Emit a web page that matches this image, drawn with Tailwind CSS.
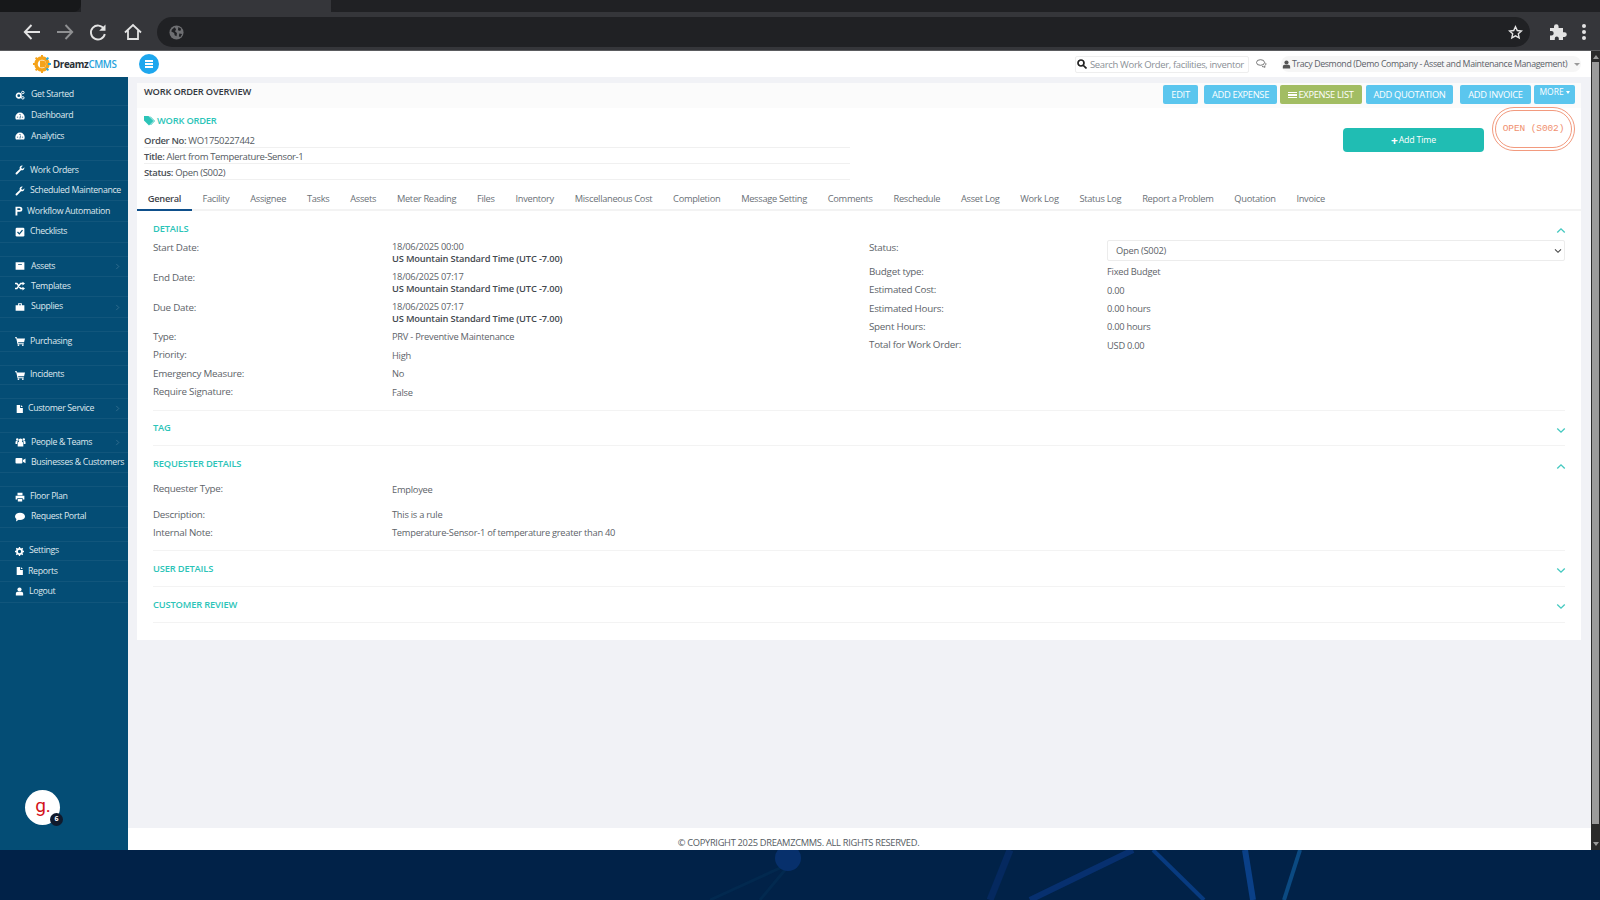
<!DOCTYPE html>
<html lang="en">
<head>
  <meta charset="UTF-8">
  <title>Work Order Overview</title>
  <script src="https://cdn.jsdelivr.net/npm/@tailwindcss/browser@4"></script>
</head>
<body class="w-[1600px] h-[900px] overflow-hidden bg-[#012248] font-['Open_Sans',sans-serif] text-[#555b62]">

  <!-- icon set -->
  <svg class="hidden">
    <symbol id="i-cogs" viewBox="0 0 16 16"><circle cx="6" cy="9" r="3.6" fill="none" stroke="currentColor" stroke-width="2.6"/><circle cx="12.5" cy="4" r="2" fill="none" stroke="currentColor" stroke-width="1.6"/><circle cx="12.5" cy="12.5" r="2" fill="none" stroke="currentColor" stroke-width="1.6"/></symbol>
    <symbol id="i-gauge" viewBox="0 0 16 16"><path fill="currentColor" d="M8 2.5a7.500 7.500 0 0 0-7.500 7.500c0 1.400.4 2.600 1 3.600h13c.6-1 1-2.200 1-3.600A7.500 7.500 0 0 0 8 2.500zM7 5h2v1.500H7zM3 9h2v1.500H3zm8 0h2v1.500h-2zM7.200 12l1-5 1 .2-.6 4.800z"/></symbol>
    <symbol id="i-wrench" viewBox="0 0 16 16"><path fill="currentColor" d="M15 4.500a4 4 0 0 1-5.400 3.800L3.500 14.600a1.500 1.500 0 0 1-2.200-2.100l6.300-6.200A4 4 0 0 1 12.500 1L10 3.400l.5 2 2 .5L15 3.500z"/></symbol>
    <symbol id="i-flow" viewBox="0 0 16 16"><path fill="currentColor" d="M4 1h7a4 4 0 0 1 0 8H7v6H4zm3 2.500v3h3.500a1.500 1.500 0 0 0 0-3z"/></symbol>
    <symbol id="i-check" viewBox="0 0 16 16"><rect x="1" y="1" width="14" height="14" rx="2" fill="currentColor"/><path d="M4 8l3 3 5-6" fill="none" stroke="#044d75" stroke-width="2"/></symbol>
    <symbol id="i-box" viewBox="0 0 16 16"><path fill="currentColor" d="M1 2h14v12H1zm4 3v1.500h6V5z"/></symbol>
    <symbol id="i-random" viewBox="0 0 16 16"><path fill="none" stroke="currentColor" stroke-width="2.200" d="M0 4h3l6 8h4M0 12h3l6-8h4"/><path fill="currentColor" d="M12 1l4 3-4 3zM12 9l4 3-4 3z"/></symbol>
    <symbol id="i-case" viewBox="0 0 16 16"><path fill="currentColor" d="M1 5h14v9H1zM5 2h6v3H9.500V3.500h-3V5H5z"/></symbol>
    <symbol id="i-cart" viewBox="0 0 16 16"><path fill="currentColor" d="M0 2h3l.5 2H16l-1.500 6H5l.3 1.500H14V13H4L2 3.500H0z"/><circle cx="5.500" cy="14.500" r="1.500" fill="currentColor"/><circle cx="12.500" cy="14.500" r="1.500" fill="currentColor"/></symbol>
    <symbol id="i-file" viewBox="0 0 16 16"><path fill="currentColor" d="M3 1h6v5h5v9H3zM10.500 1L14 4.500h-3.500z"/></symbol>
    <symbol id="i-users" viewBox="0 0 16 16"><circle cx="8" cy="5.500" r="3" fill="currentColor"/><circle cx="2.800" cy="4" r="2" fill="currentColor"/><circle cx="13.200" cy="4" r="2" fill="currentColor"/><path fill="currentColor" d="M3.500 15V10a2 2 0 0 1 2-2h5a2 2 0 0 1 2 2v5zM0 11V8a1.500 1.500 0 0 1 1.500-1.500h2L2.500 11zM16 11V8a1.500 1.500 0 0 0-1.500-1.500h-2l1 4.500z"/></symbol>
    <symbol id="i-video" viewBox="0 0 16 16"><rect x="0" y="3" width="11" height="9" rx="1.500" fill="currentColor"/><path fill="currentColor" d="M12 6.500l4-2.500v7.500l-4-2.500z"/></symbol>
    <symbol id="i-print" viewBox="0 0 16 16"><path fill="currentColor" d="M4 1h8v4H4zM1 6h14v6h-2.500v-2h-9v2H1zM4.500 11h7v4h-7z"/></symbol>
    <symbol id="i-bubble" viewBox="0 0 16 16"><ellipse cx="8" cy="7" rx="8" ry="5.800" fill="currentColor"/><path fill="currentColor" d="M2.500 10L1.500 15l5-3z"/></symbol>
    <symbol id="i-gear" viewBox="0 0 16 16"><circle cx="8" cy="8" r="4.500" fill="none" stroke="currentColor" stroke-width="3.200"/><path stroke="currentColor" stroke-width="2.400" d="M8 0v3M8 13v3M0 8h3M13 8h3M2.300 2.300l2 2M11.700 11.700l2 2M13.700 2.300l-2 2M4.300 11.700l-2 2"/></symbol>
    <symbol id="i-user" viewBox="0 0 16 16"><circle cx="8" cy="4.500" r="3.700" fill="currentColor"/><path fill="currentColor" d="M1.500 15v-3.500a3 3 0 0 1 3-3h7a3 3 0 0 1 3 3V15z"/></symbol>
    <symbol id="i-chev-r" viewBox="0 0 8 8"><path d="M2.500 1l3 3-3 3" fill="none" stroke="currentColor" stroke-width="1"/></symbol>
    <symbol id="i-up" viewBox="0 0 12 8"><path d="M1.500 6.500L6 2l4.500 4.500" fill="none" stroke="currentColor" stroke-width="1.600"/></symbol>
    <symbol id="i-down" viewBox="0 0 12 8"><path d="M1.500 1.500L6 6l4.500-4.500" fill="none" stroke="currentColor" stroke-width="1.600"/></symbol>
  </svg>

  <!-- browser chrome -->
  <div class="h-[12px] bg-[#202124] flex">
    <div class="w-[81px] bg-[#17181a] rounded-br-lg"></div>
    <div class="w-[250px] bg-[#35363a]"></div>
    <div class="flex-1 bg-[#202124] rounded-bl-lg"></div>
  </div>
  <div class="h-[39px] bg-[#35363a] flex items-center pl-[22px] pt-[2px] border-b border-[#5a5b5e]">
    <svg class="w-[20px] h-[20px] shrink-0 text-[#e3e3e3] mr-[13px]" viewBox="0 0 20 20" fill="none" stroke="currentColor" stroke-width="1.900"><path d="M18 10H3M9.500 3L2.800 10l6.700 7"/></svg>
    <svg class="w-[20px] h-[20px] shrink-0 text-[#8f9092] mr-[13px]" viewBox="0 0 20 20" fill="none" stroke="currentColor" stroke-width="1.900"><path d="M2 10h15M10.500 3l6.700 7-6.700 7"/></svg>
    <svg class="w-[20px] h-[20px] shrink-0 text-[#e3e3e3] mr-[15px]" viewBox="0 0 20 20" fill="none" stroke="currentColor" stroke-width="1.900"><path d="M16 7a7 7 0 1 0 .8 5"/><path fill="currentColor" stroke="none" d="M17.500 2.500v6.300h-6.300z"/></svg>
    <svg class="w-[20px] h-[20px] shrink-0 text-[#e3e3e3] mr-[14px]" viewBox="0 0 20 20" fill="none" stroke="currentColor" stroke-width="1.800"><path d="M2 10.500L10 3l8 7.500M5 8.500V17h10V8.500"/></svg>
    <div class="w-[1373px] h-[30px] shrink-0 bg-[#202124] rounded-full flex items-center pl-[12px] pr-[7px] justify-between">
      <svg class="w-[15px] h-[15px] text-[#6e6f72]" viewBox="0 0 16 16"><circle cx="8" cy="8" r="7.500" fill="currentColor"/><path fill="#202124" d="M3 5l3-2.500 1.500 2-1 2.500 2 1.500-.5 3.500-2-1-.5-2.500L2.500 7zM10 2l3 2-1 2.500-2.500-1zM11 9l3 .5-2 3.500-1.500-1z"/></svg>
      <svg class="w-[15px] h-[15px] text-[#e3e3e3]" viewBox="0 0 16 16" fill="none" stroke="currentColor" stroke-width="1.500"><path d="M8 1.800l1.900 4.100 4.400.5-3.300 3 .9 4.400L8 11.600l-3.900 2.200.9-4.400-3.300-3 4.400-.5z"/></svg>
    </div>
    <svg class="w-[18px] h-[18px] shrink-0 text-[#e3e3e3] ml-[19px]" viewBox="0 0 18 18"><path fill="currentColor" d="M1 5h4V3.500a2.300 2.300 0 0 1 4.600 0V5H14v4.300h1.500a2.300 2.300 0 0 1 0 4.600H14V17H9.800v-1.500a2 2 0 0 0-4 0V17H1v-4.500h1.400a2.300 2.300 0 0 0 0-4.600H1z"/></svg>
    <div class="ml-[15px] flex flex-col gap-[2.500px]">
      <span class="block w-[3.500px] h-[3.500px] rounded-full bg-[#e3e3e3]"></span>
      <span class="block w-[3.500px] h-[3.500px] rounded-full bg-[#e3e3e3]"></span>
      <span class="block w-[3.500px] h-[3.500px] rounded-full bg-[#e3e3e3]"></span>
    </div>
  </div>

  <!-- page + scrollbar -->
  <div class="h-[799px] flex">
    <div class="w-[1591px] flex flex-col bg-[#f1f2f6]">

      <!-- top header -->
      <header class="h-[26px] shrink-0 bg-white flex items-center">
        <div class="w-[128px] flex items-center pl-[33px]">
          <svg class="w-[18px] h-[18px] shrink-0" viewBox="0 0 18 18">
            <circle cx="9" cy="9" r="6" fill="none" stroke="#f5a31a" stroke-width="3.500"/>
            <path stroke="#f5a31a" stroke-width="2" d="M9 0v3M0 9h3M2.600 2.600l2 2M2.600 15.400l2-2M9 15v3"/>
            <path stroke="#29abe2" stroke-width="2" d="M15 9h3M15.400 2.600l-2 2M15.400 15.400l-2-2"/>
            <path fill="#f5a31a" d="M7 5.500h2.500a3.500 3.500 0 0 1 0 7H7z"/>
          </svg>
          <span class="ml-[2px] pt-[3px] text-[9.800px] font-bold text-[#2a2f36] tracking-[-0.4px]">Dreamz<span class="text-[#29a3dd] font-semibold">CMMS</span></span>
        </div>
        <div class="ml-[11px] w-[20px] h-[20px] rounded-full bg-[#1ea7ee] flex flex-col items-center justify-center gap-[1.500px]">
          <span class="block w-[8px] h-[1.500px] bg-white"></span>
          <span class="block w-[8px] h-[1.500px] bg-white"></span>
          <span class="block w-[8px] h-[1.500px] bg-white"></span>
        </div>
        <div class="ml-auto w-[174px] h-[17px] border border-[#eeeeee] rounded-[2px] flex items-center pl-[1px] overflow-hidden whitespace-nowrap text-[9.500px] tracking-[-0.35px] text-[#8b9096]">
          <svg class="w-[10px] h-[10px] shrink-0 mr-[3px] text-[#222]" viewBox="0 0 10 10" fill="none" stroke="currentColor" stroke-width="1.700"><circle cx="4" cy="4" r="3"/><path d="M6.300 6.300L9.500 9.500"/></svg>
          <span class="pt-[2px]">Search Work Order, facilities, inventor</span>
        </div>
        <svg class="w-[11px] h-[10px] shrink-0 ml-[7px] text-[#666]" viewBox="0 0 11 10" fill="none" stroke="currentColor" stroke-width="0.900"><ellipse cx="4.500" cy="3.500" rx="4" ry="2.800"/><path d="M6 7.500c1 .3 2 .2 3 .8l-.3-1.500c1.200-.8 1.500-2 .8-3"/></svg>
        <div class="ml-[14px] mr-[10px] w-[300px] h-[16px] bg-[#f6f6f6] rounded-full flex items-center whitespace-nowrap text-[8.800px] tracking-[-0.35px] text-[#5b6168]">
          <svg class="w-[9px] h-[9px] shrink-0 mr-[1px] ml-[1px] text-[#555]"><use href="#i-user"/></svg>
          <span class="pt-[1px]">Tracy Desmond (Demo Company - Asset and Maintenance Management)</span>
          <span class="ml-[7px] w-0 h-0 border-x-[3px] border-x-transparent border-t-[3px] border-t-[#999]"></span>
        </div>
      </header>

      <div class="flex-1 flex min-h-0">
        <!-- sidebar -->
        <aside class="relative w-[128px] shrink-0 bg-[#044d75] text-[#dfe8ee] text-[8.800px] tracking-[-0.35px] pt-[8px]">
          <nav class="flex flex-col">
            <a class="h-[20.700px] border-b border-white/5 flex items-center pl-[15px] gap-[6px] whitespace-nowrap"><svg class="w-[10px] h-[10px] shrink-0 text-white"><use href="#i-cogs"/></svg>Get Started</a>
            <a class="h-[20.700px] border-b border-white/5 flex items-center pl-[15px] gap-[6px] whitespace-nowrap"><svg class="w-[10px] h-[10px] shrink-0 text-white"><use href="#i-gauge"/></svg>Dashboard</a>
            <a class="h-[20.700px] border-b border-white/5 flex items-center pl-[15px] gap-[6px] whitespace-nowrap"><svg class="w-[10px] h-[10px] shrink-0 text-white"><use href="#i-gauge"/></svg>Analytics</a>

            <a class="mt-[13px] h-[20.700px] border-y border-white/5 flex items-center pl-[15px] gap-[5px] whitespace-nowrap"><svg class="w-[10px] h-[10px] shrink-0 text-white"><use href="#i-wrench"/></svg>Work Orders</a>
            <a class="h-[20.700px] border-b border-white/5 flex items-center pl-[15px] gap-[5px] whitespace-nowrap"><svg class="w-[10px] h-[10px] shrink-0 text-white"><use href="#i-wrench"/></svg>Scheduled Maintenance</a>
            <a class="h-[20.700px] border-b border-white/5 flex items-center pl-[13px] gap-[4px] whitespace-nowrap"><svg class="w-[10px] h-[10px] shrink-0 text-white"><use href="#i-flow"/></svg>Workflow Automation</a>
            <a class="h-[20.700px] border-b border-white/5 flex items-center pl-[15px] gap-[5px] whitespace-nowrap"><svg class="w-[10px] h-[10px] shrink-0 text-white"><use href="#i-check"/></svg>Checklists</a>

            <a class="mt-[13px] h-[20.700px] border-y border-white/5 flex items-center pl-[15px] gap-[6px] whitespace-nowrap"><svg class="w-[10px] h-[10px] shrink-0 text-white"><use href="#i-box"/></svg>Assets<svg class="w-[7px] h-[7px] ml-auto mr-[7px] text-white/20"><use href="#i-chev-r"/></svg></a>
            <a class="h-[20.700px] border-b border-white/5 flex items-center pl-[15px] gap-[6px] whitespace-nowrap"><svg class="w-[10px] h-[10px] shrink-0 text-white"><use href="#i-random"/></svg>Templates</a>
            <a class="h-[20.700px] border-b border-white/5 flex items-center pl-[15px] gap-[6px] whitespace-nowrap"><svg class="w-[10px] h-[10px] shrink-0 text-white"><use href="#i-case"/></svg>Supplies<svg class="w-[7px] h-[7px] ml-auto mr-[7px] text-white/20"><use href="#i-chev-r"/></svg></a>

            <a class="mt-[13px] h-[20.700px] border-y border-white/5 flex items-center pl-[15px] gap-[5px] whitespace-nowrap"><svg class="w-[10px] h-[10px] shrink-0 text-white"><use href="#i-cart"/></svg>Purchasing</a>

            <a class="mt-[13px] h-[20.700px] border-y border-white/5 flex items-center pl-[15px] gap-[5px] whitespace-nowrap"><svg class="w-[10px] h-[10px] shrink-0 text-white"><use href="#i-cart"/></svg>Incidents</a>

            <a class="mt-[13px] h-[20.700px] border-y border-white/5 flex items-center pl-[15px] gap-[4px] whitespace-nowrap"><svg class="w-[9px] h-[10px] shrink-0 text-white"><use href="#i-file"/></svg>Customer Service<svg class="w-[7px] h-[7px] ml-auto mr-[7px] text-white/20"><use href="#i-chev-r"/></svg></a>

            <a class="mt-[13px] h-[20.700px] border-y border-white/5 flex items-center pl-[15px] gap-[5px] whitespace-nowrap"><svg class="w-[11px] h-[10px] shrink-0 text-white"><use href="#i-users"/></svg>People &amp; Teams<svg class="w-[7px] h-[7px] ml-auto mr-[7px] text-white/20"><use href="#i-chev-r"/></svg></a>
            <a class="h-[20.700px] border-b border-white/5 flex items-center pl-[15px] gap-[5px] whitespace-nowrap"><svg class="w-[11px] h-[10px] shrink-0 text-white -mt-[3px]"><use href="#i-video"/></svg>Businesses &amp; Customers</a>

            <a class="mt-[13px] h-[20.700px] border-y border-white/5 flex items-center pl-[15px] gap-[5px] whitespace-nowrap"><svg class="w-[10px] h-[10px] shrink-0 text-white"><use href="#i-print"/></svg>Floor Plan</a>
            <a class="h-[20.700px] border-b border-white/5 flex items-center pl-[15px] gap-[6px] whitespace-nowrap"><svg class="w-[10px] h-[10px] shrink-0 text-white"><use href="#i-bubble"/></svg>Request Portal</a>

            <a class="mt-[13px] h-[20.700px] border-y border-white/5 flex items-center pl-[15px] gap-[5px] whitespace-nowrap"><svg class="w-[9px] h-[9px] shrink-0 text-white"><use href="#i-gear"/></svg>Settings</a>
            <a class="h-[20.700px] border-b border-white/5 flex items-center pl-[15px] gap-[4px] whitespace-nowrap"><svg class="w-[9px] h-[10px] shrink-0 text-white"><use href="#i-file"/></svg>Reports</a>
            <a class="h-[20.700px] border-b border-white/5 flex items-center pl-[15px] gap-[5px] whitespace-nowrap"><svg class="w-[9px] h-[9px] shrink-0 text-white"><use href="#i-user"/></svg>Logout</a>
          </nav>

          <!-- chat widget floating over sidebar -->
          <div class="absolute left-[25px] top-[713px] w-[35px] h-[35px] rounded-full bg-white flex items-center justify-center">
            <span class="text-[#d3121b] text-[19px] tracking-normal leading-none font-['Roboto',sans-serif] -mt-[5px] ml-[1px]">g.</span>
            <span class="absolute left-[25px] top-[23px] w-[13px] h-[13px] rounded-full bg-[#101a2c] text-white text-[7px] tracking-normal font-bold flex items-center justify-center">6</span>
          </div>
        </aside>

        <!-- main column -->
        <div class="flex-1 flex flex-col min-w-0">
          <main class="flex-1 pt-[6px] pl-[9px] pr-[10px]">
            <div class="bg-white h-[557px] flex flex-col">
              <!-- overview title + actions -->
              <div class="h-[25px] bg-[#fbfbfb] flex items-start pl-[7px] pr-[6px]">
                <h1 class="mt-[2px] text-[9.300px] leading-[14px] font-semibold text-[#33383e] tracking-[-0.2px]">WORK ORDER OVERVIEW</h1>
                <div class="ml-auto mt-[2px] flex text-[9.300px] tracking-[-0.3px] text-white">
                  <button class="w-[35px] h-[19px] pt-[1px] bg-[#5bc6ee] rounded-[2px]">EDIT</button>
                  <button class="ml-[6px] w-[73px] h-[19px] pt-[1px] bg-[#5bc6ee] rounded-[2px]">ADD EXPENSE</button>
                  <button class="ml-[3px] w-[82px] h-[19px] pt-[1px] bg-[#a2bd63] rounded-[2px] flex items-center justify-center gap-[1px]">
                    <span class="flex flex-col gap-[1px]"><span class="block w-[9px] h-[1.500px] bg-white"></span><span class="block w-[9px] h-[1.500px] bg-white"></span><span class="block w-[9px] h-[1.500px] bg-white"></span></span>
                    EXPENSE LIST
                  </button>
                  <button class="ml-[4px] w-[87px] h-[19px] pt-[1px] bg-[#5bc6ee] rounded-[2px]">ADD QUOTATION</button>
                  <button class="ml-[7px] w-[71px] h-[19px] pt-[1px] bg-[#5bc6ee] rounded-[2px]">ADD INVOICE</button>
                  <button class="ml-[3px] w-[41px] h-[19px] bg-[#5bc6ee] rounded-[2px] text-[8.500px] tracking-normal flex items-start pt-[1px] justify-center gap-[2px]">MORE<span class="mt-[5px] w-0 h-0 border-x-[2.500px] border-x-transparent border-t-[3px] border-t-white"></span></button>
                </div>
              </div>

              <!-- summary block -->
              <div class="h-[77px] pl-[7px] pr-[6px] flex">
                <div class="w-[706px] text-[9.500px] tracking-[-0.35px]">
                  <div class="h-[25px] flex items-center gap-[2px] text-[#2cc4b8] text-[9.300px] tracking-[-0.2px] font-semibold">
                    <svg class="w-[11px] h-[10px] shrink-0" viewBox="0 0 11 10"><path fill="currentColor" d="M0 0h4.500l5 5-4.500 4.500-5-5z"/><path fill="none" stroke="currentColor" d="M6 .5l4.500 4.500-4 4"/></svg>
                    WORK ORDER
                  </div>
                  <div class="h-[15px] pt-[3px] border-b border-[#f0f0f0] flex items-center"><b class="font-semibold text-[#4a4f55]">Order No:</b>&nbsp;WO1750227442</div>
                  <div class="h-[16px] pt-[3px] border-b border-[#f0f0f0] flex items-center"><b class="font-semibold text-[#4a4f55]">Title:</b>&nbsp;Alert from Temperature-Sensor-1</div>
                  <div class="h-[16px] pt-[3px] border-b border-[#f0f0f0] flex items-center"><b class="font-semibold text-[#4a4f55]">Status:</b>&nbsp;Open (S002)</div>
                </div>
                <button class="ml-auto mt-[20px] w-[141px] h-[24px] pt-[2px] bg-[#20bdb3] rounded-[4px] text-white text-[8.800px] tracking-[-0.2px] flex items-center justify-center gap-[1px]"><span class="font-bold text-[12px] leading-none">+</span>Add Time</button>
                <div class="ml-[8px] -mt-[1px] w-[83px] h-[44px] rounded-full border-[4px] border-double border-[#f29a7e] flex items-center justify-center font-['Liberation_Mono',monospace] text-[9.500px] tracking-[-0.1px] text-[#f0906f] whitespace-nowrap">OPEN (S002)</div>
              </div>

              <!-- tabs -->
              <div class="h-[26px] border-b-2 border-[#f3f3f3] flex text-[9.300px] tracking-[-0.3px] text-[#6b7177] whitespace-nowrap">
                <span class="w-[55px] h-[26px] pt-[3px] border-b-2 border-[#0e4f8b] flex items-center justify-center font-semibold text-[#3f444a]">General</span>
                <span class="px-[10.400px] pt-[3px] flex items-center">Facility</span>
                <span class="px-[10.400px] pt-[3px] flex items-center">Assignee</span>
                <span class="px-[10.400px] pt-[3px] flex items-center">Tasks</span>
                <span class="px-[10.400px] pt-[3px] flex items-center">Assets</span>
                <span class="px-[10.400px] pt-[3px] flex items-center">Meter Reading</span>
                <span class="px-[10.400px] pt-[3px] flex items-center">Files</span>
                <span class="px-[10.400px] pt-[3px] flex items-center">Inventory</span>
                <span class="px-[10.400px] pt-[3px] flex items-center">Miscellaneous Cost</span>
                <span class="px-[10.400px] pt-[3px] flex items-center">Completion</span>
                <span class="px-[10.400px] pt-[3px] flex items-center">Message Setting</span>
                <span class="px-[10.400px] pt-[3px] flex items-center">Comments</span>
                <span class="px-[10.400px] pt-[3px] flex items-center">Reschedule</span>
                <span class="px-[10.400px] pt-[3px] flex items-center">Asset Log</span>
                <span class="px-[10.400px] pt-[3px] flex items-center">Work Log</span>
                <span class="px-[10.400px] pt-[3px] flex items-center">Status Log</span>
                <span class="px-[10.400px] pt-[3px] flex items-center">Report a Problem</span>
                <span class="px-[10.400px] pt-[3px] flex items-center">Quotation</span>
                <span class="px-[10.400px] pt-[3px] flex items-center">Invoice</span>
              </div>

              <!-- sections -->
              <div class="px-[16px] text-[9.800px] tracking-[-0.25px] text-[#5d6369]">
                <section class="h-[200px] border-b border-[#f3f3f3]">
                  <div class="h-[34px] pt-[1px] flex items-center justify-between">
                    <h2 class="text-[9.300px] tracking-[-0.15px] font-semibold text-[#2cc4b8]">DETAILS</h2>
                    <svg class="w-[10px] h-[7px] mt-[4px] text-[#45c9c0] -mr-[1px]"><use href="#i-up"/></svg>
                  </div>
                  <div class="flex -mt-[7px]">
                    <div class="w-[716px] grid grid-cols-[239px_1fr] auto-rows-min">
                      <div class="h-[30px] pt-[3px]">Start Date:</div>
                      <div class="h-[30px] text-[9.300px] leading-[12px] pt-[3px]">18/06/2025 00:00<br><b class="font-semibold text-[#43484e] tracking-[-0.16px]">US Mountain Standard Time (UTC -7.00)</b></div>
                      <div class="h-[30px] pt-[3px]">End Date:</div>
                      <div class="h-[30px] text-[9.300px] leading-[12px] pt-[3px]">18/06/2025 07:17<br><b class="font-semibold text-[#43484e] tracking-[-0.16px]">US Mountain Standard Time (UTC -7.00)</b></div>
                      <div class="h-[30px] pt-[3px]">Due Date:</div>
                      <div class="h-[30px] text-[9.300px] leading-[12px] pt-[3px]">18/06/2025 07:17<br><b class="font-semibold text-[#43484e] tracking-[-0.16px]">US Mountain Standard Time (UTC -7.00)</b></div>
                      <div class="h-[18.500px] flex items-center">Type:</div><div class="h-[18.500px] flex items-center text-[9.300px]">PRV - Preventive Maintenance</div>
                      <div class="h-[18.500px] flex items-center">Priority:</div><div class="h-[18.500px] flex items-center text-[9.300px]">High</div>
                      <div class="h-[18.500px] flex items-center">Emergency Measure:</div><div class="h-[18.500px] flex items-center text-[9.300px]">No</div>
                      <div class="h-[18.500px] flex items-center">Require Signature:</div><div class="h-[18.500px] flex items-center text-[9.300px]">False</div>
                    </div>
                    <div class="flex-1 grid grid-cols-[238px_1fr] auto-rows-min">
                      <div class="h-[25px] pt-[3px]">Status:</div>
                      <div class="h-[25px] pt-[2px]">
                        <div class="h-[21px] w-[458px] border border-[#ececec] rounded-[2px] flex items-center justify-between pl-[8px] pr-[2px] text-[9.300px]">Open (S002)<svg class="w-[8px] h-[6px] text-[#444]"><use href="#i-down"/></svg></div>
                      </div>
                      <div class="h-[18.400px] flex items-center">Budget type:</div><div class="h-[18.400px] flex items-center text-[9.300px]">Fixed Budget</div>
                      <div class="h-[18.400px] flex items-center">Estimated Cost:</div><div class="h-[18.400px] flex items-center text-[9.300px]">0.00</div>
                      <div class="h-[18.400px] flex items-center">Estimated Hours:</div><div class="h-[18.400px] flex items-center text-[9.300px]">0.00 hours</div>
                      <div class="h-[18.400px] flex items-center">Spent Hours:</div><div class="h-[18.400px] flex items-center text-[9.300px]">0.00 hours</div>
                      <div class="h-[18.400px] flex items-center">Total for Work Order:</div><div class="h-[18.400px] flex items-center text-[9.300px]">USD 0.00</div>
                    </div>
                  </div>
                </section>

                <section class="h-[35px] border-b border-[#f3f3f3] flex items-center justify-between">
                  <h2 class="text-[9.300px] tracking-[-0.15px] font-semibold text-[#2cc4b8]">TAG</h2>
                  <svg class="w-[10px] h-[7px] mt-[4px] text-[#45c9c0] -mr-[1px]"><use href="#i-down"/></svg>
                </section>

                <section class="h-[105px] border-b border-[#f3f3f3]">
                  <div class="h-[36px] flex items-center justify-between">
                    <h2 class="text-[9.300px] tracking-[-0.15px] font-semibold text-[#2cc4b8]">REQUESTER DETAILS</h2>
                    <svg class="w-[10px] h-[7px] mt-[4px] text-[#45c9c0] -mr-[1px]"><use href="#i-up"/></svg>
                  </div>
                  <div class="grid grid-cols-[239px_1fr] -mt-[3px]">
                    <div class="h-[27px] pb-[6px] flex items-center">Requester Type:</div><div class="h-[27px] pb-[6px] flex items-center text-[9.300px]">Employee</div>
                    <div class="h-[18px] flex items-center">Description:</div><div class="h-[18px] flex items-center text-[9.300px]">This is a rule</div>
                    <div class="h-[18px] flex items-center">Internal Note:</div><div class="h-[18px] flex items-center text-[9.300px]">Temperature-Sensor-1 of temperature greater than 40</div>
                  </div>
                </section>

                <section class="h-[36px] border-b border-[#f3f3f3] flex items-center justify-between">
                  <h2 class="text-[9.300px] tracking-[-0.15px] font-semibold text-[#2cc4b8]">USER DETAILS</h2>
                  <svg class="w-[10px] h-[7px] mt-[4px] text-[#45c9c0] -mr-[1px]"><use href="#i-down"/></svg>
                </section>
                <section class="h-[36px] border-b border-[#f3f3f3] flex items-center justify-between">
                  <h2 class="text-[9.300px] tracking-[-0.15px] font-semibold text-[#2cc4b8]">CUSTOMER REVIEW</h2>
                  <svg class="w-[10px] h-[7px] mt-[4px] text-[#45c9c0] -mr-[1px]"><use href="#i-down"/></svg>
                </section>
              </div>
            </div>
          </main>
          <footer class="h-[22px] shrink-0 bg-white flex items-center justify-center text-[9.300px] tracking-[-0.3px] text-[#555b62] pr-[122px] pt-[7px]">© COPYRIGHT 2025 DREAMZCMMS. ALL RIGHTS RESERVED.</footer>
        </div>
      </div>
    </div>

    <!-- scrollbar -->
    <div class="w-[9px] bg-[#2b2b2b] flex flex-col items-center py-[4px]">
      <span class="w-0 h-0 border-x-[3px] border-x-transparent border-b-[4px] border-b-[#9a9a9a]"></span>
      <span class="mt-[3px] w-[7px] h-[762px] bg-[#9b9b9b]"></span>
      <span class="mt-auto w-0 h-0 border-x-[3px] border-x-transparent border-t-[4px] border-t-[#9a9a9a]"></span>
    </div>
  </div>

  <!-- wallpaper peeking below window -->
  <svg class="block w-[1600px] h-[50px]" viewBox="0 0 1600 50">
    <g fill="none">
      <path stroke="#02294f" stroke-width="3" d="M780 18L710 50M785 20L760 50"/>
      <path stroke="#05295f" stroke-width="7" d="M1010 0L990 50"/>
      <path stroke="#07306f" stroke-width="6" d="M1133 0L1030 50"/>
      <path stroke="#083b80" stroke-width="4" d="M1153 0L1204 50"/>
      <path stroke="#0a4088" stroke-width="6" d="M1245 0L1253 50"/>
      <path stroke="#0b4a82" stroke-width="4" d="M1300 0L1284 50"/>
    </g>
    <ellipse cx="788" cy="8" rx="13" ry="13" fill="#07306c"/>
  </svg>
</body>
</html>
